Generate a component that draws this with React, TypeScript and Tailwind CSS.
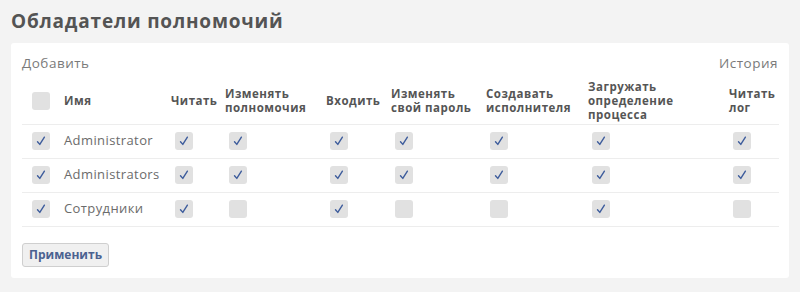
import React from 'react';

const COLUMNS: { key: string; label: string[]; width: number }[] = [
  { key: 'read', label: ['Читать'], width: 54 },
  { key: 'perm', label: ['Изменять', 'полномочия'], width: 101 },
  { key: 'login', label: ['Входить'], width: 65 },
  { key: 'pass', label: ['Изменять', 'свой пароль'], width: 95 },
  { key: 'exec', label: ['Создавать', 'исполнителя'], width: 102 },
  { key: 'proc', label: ['Загружать', 'определение', 'процесса'], width: 141 },
  { key: 'log', label: ['Читать', 'лог'], width: 54 },
];

const ROWS: { name: string; values: boolean[] }[] = [
  { name: 'Administrator', values: [true, true, true, true, true, true, true] },
  { name: 'Administrators', values: [true, true, true, true, true, true, true] },
  { name: 'Сотрудники', values: [true, false, true, false, false, true, false] },
];

function Box({ checked }: { checked: boolean }) {
  return (
    <span className="flex h-[18px] w-[18px] items-center justify-center rounded-[3px] bg-[#e1e1e1]">
      {checked && (
        <svg width="18" height="18" viewBox="0 0 18 18" fill="none">
          <path d="M5.5 9.8 L7.8 12.4 L12.4 5.2" stroke="#3d5c9c" strokeWidth="1.4" strokeLinecap="round" strokeLinejoin="round" />
        </svg>
      )}
    </span>
  );
}

export default function App() {
  return (
    <div className="h-[292px] w-[800px] bg-[#f3f3f3] pl-[11px] pr-[11px] pt-[8px]" style={{ fontFamily: '"Open Sans", "Noto Sans", sans-serif' }}>
      <h1 className="text-[19px] font-bold leading-[26px] tracking-[0.8px] text-[#545454]">Обладатели полномочий</h1>

      <div className="mt-[9px] h-[235px] rounded-[3px] bg-white px-[11px] pt-[12px]">
        <div className="flex justify-between text-[13.5px] leading-[16px] tracking-[0.5px] text-[#7a7a7a]">
          <span>Добавить</span>
          <span>История</span>
        </div>

        <table className="mt-[7px] w-[757px] table-fixed border-collapse">
          <colgroup>
            <col style={{ width: 38 }} />
            <col style={{ width: 107 }} />
            {COLUMNS.map((c) => (
              <col key={c.key} style={{ width: c.width }} />
            ))}
          </colgroup>
          <thead>
            <tr className="h-[46px] border-b border-[#ededed]">
              <th className="pl-[10px] align-middle">
                <Box checked={false} />
              </th>
              <th className="pl-[4px] text-left align-middle text-[11.5px] font-bold leading-[14px] tracking-[0.5px] text-[#555]">Имя</th>
              {COLUMNS.map((c) => (
                <th key={c.key} className="pl-[4px] text-left align-middle text-[11.5px] font-bold leading-[14px] tracking-[0.5px] text-[#555]">
                  {c.label.map((l, i) => (
                    <div key={i} className="whitespace-nowrap">{l}</div>
                  ))}
                </th>
              ))}
            </tr>
          </thead>
          <tbody>
            {ROWS.map((r) => (
              <tr key={r.name} className="h-[34px] border-b border-[#ededed]">
                <td className="pl-[10px] align-middle">
                  <Box checked />
                </td>
                <td className="pl-[4px] align-middle text-[13px] tracking-[0.4px] text-[#6b6b6b]">{r.name}</td>
                {r.values.map((v, i) => (
                  <td key={i} className="pl-[8px] align-middle">
                    <Box checked={v} />
                  </td>
                ))}
              </tr>
            ))}
          </tbody>
        </table>

        <button className="mt-[16px] h-[24px] rounded-[3px] border border-[#cfcfcf] bg-[#f0f0f0] px-[6px] text-[12px] font-bold text-[#4b6290]">
          Применить
        </button>
      </div>
    </div>
  );
}
